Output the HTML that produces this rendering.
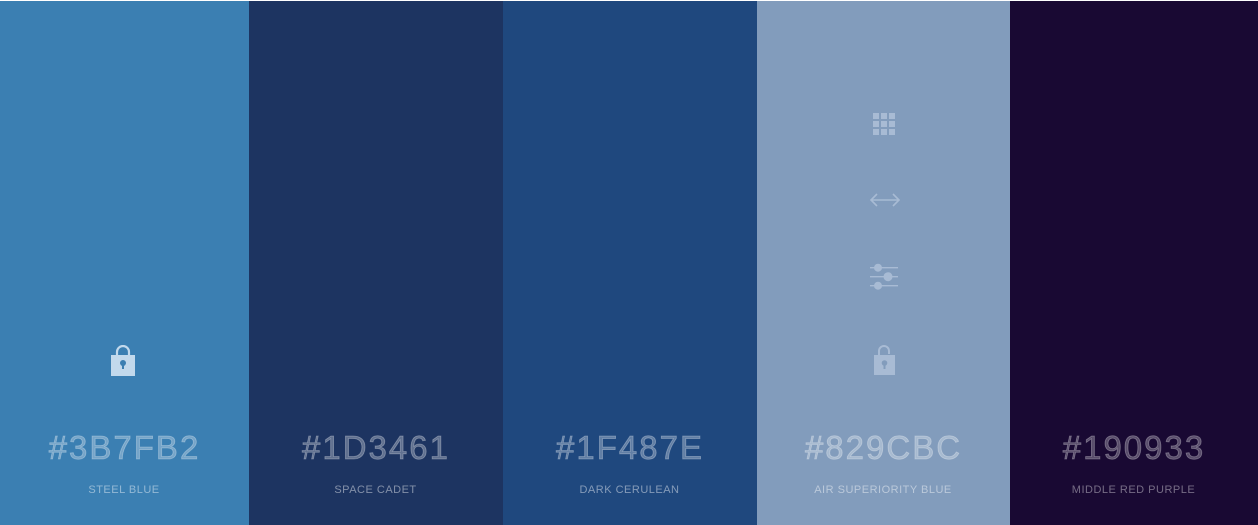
<!DOCTYPE html>
<html><head><style>
html,body{margin:0;padding:0;width:1258px;height:525px;overflow:hidden;background:#fff}
.wrap{position:absolute;top:1px;left:0;width:1258px;height:524px;display:flex}
.c{position:relative;height:100%}
.hex{position:absolute;left:0;right:0;top:428px;text-align:center;font:33px "Liberation Sans",sans-serif;color:rgba(255,255,255,.3);letter-spacing:2px;-webkit-text-stroke:0.8px rgba(255,255,255,.3)}
.nm{position:absolute;left:-1px;right:0;top:483px;text-align:center;font:11px "Liberation Sans",sans-serif;color:rgba(255,255,255,.45);letter-spacing:.5px}
svg{position:absolute}
</style></head><body>
<div class="wrap">
<div class="c" style="width:249px;background:#3B7FB2">
<svg style="left:110px;top:344px" width="26" height="32" viewBox="0 0 26 32"><path d="M7 11V7a6 6 0 0 1 12 0v4" fill="none" stroke="#c2d9ec" stroke-width="2.2"/><rect x="1" y="10" width="24" height="21" fill="#c2d9ec"/><circle cx="13" cy="18" r="3" fill="#3B7FB2"/><rect x="12" y="19" width="2" height="5" fill="#3B7FB2"/></svg>
<div class="hex">#3B7FB2</div><div class="nm">STEEL BLUE</div></div>
<div class="c" style="width:254px;background:#1D3461"><div class="hex">#1D3461</div><div class="nm">SPACE CADET</div></div>
<div class="c" style="width:254px;background:#1F487E"><div class="hex">#1F487E</div><div class="nm">DARK CERULEAN</div></div>
<div class="c" style="width:253px;background:#829CBC">
<svg style="left:115px;top:111px" width="24" height="24" viewBox="0 0 24 24" fill="#a8bbd4"><rect x="1" y="1" width="6" height="6"/><rect x="9" y="1" width="6" height="6"/><rect x="17" y="1" width="6" height="6"/><rect x="1" y="9" width="6" height="6"/><rect x="9" y="9" width="6" height="6"/><rect x="17" y="9" width="6" height="6"/><rect x="1" y="17" width="6" height="6"/><rect x="9" y="17" width="6" height="6"/><rect x="17" y="17" width="6" height="6"/></svg>
<svg style="left:112px;top:190px" width="32" height="18" viewBox="0 0 32 18" fill="none" stroke="#a8bbd4" stroke-width="1.6"><path d="M2 9h28M8 3L2 9l6 6M24 3l6 6-6 6"/></svg>
<svg style="left:112px;top:261px" width="30" height="30" viewBox="0 0 30 30" fill="#a8bbd4"><rect x="1" y="5" width="28" height="1.4"/><rect x="1" y="14" width="28" height="1.4"/><rect x="1" y="23" width="28" height="1.4"/><circle cx="9" cy="5.7" r="4"/><circle cx="19" cy="14.7" r="4.5"/><circle cx="9" cy="23.7" r="4"/></svg>
<svg style="left:116px;top:344px" width="24" height="32" viewBox="0 0 24 32"><path d="M6 11V6a5 5 0 0 1 10 0v3" fill="none" stroke="#a8bbd4" stroke-width="2"/><rect x="1" y="10" width="21" height="20" fill="#a8bbd4"/><circle cx="11.5" cy="18" r="2.8" fill="#829CBC"/><rect x="10.5" y="19" width="2" height="5" fill="#829CBC"/></svg>
<div class="hex">#829CBC</div><div class="nm">AIR SUPERIORITY BLUE</div></div>
<div class="c" style="width:248px;background:#190933"><div class="hex" style="color:rgba(255,255,255,.28)">#190933</div><div class="nm" style="color:rgba(255,255,255,.4)">MIDDLE RED PURPLE</div></div>
</div>
</body></html>
